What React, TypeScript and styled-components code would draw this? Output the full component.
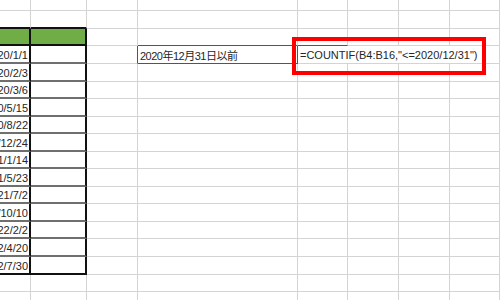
import styled, { createGlobalStyle } from 'styled-components';

const GRID = '#d4d4d4';
const INK = '#111111';
const RULE = '#6f6f6f';
const BOX = '#555555';

const GlobalStyle = createGlobalStyle`
  html, body {
    margin: 0;
    padding: 0;
    background: #ffffff;
    overflow: hidden;
  }
`;

const COLS = [31, 56, 51, 160, 50, 51, 51, 50];
const ROWS = [11, 18, 17, 18, 18, 17, 18, 17, 18, 17, 18, 17, 18, 17, 18, 18, 17, 17];

const Sheet = styled.div`
  position: relative;
  display: grid;
  grid-template-columns: ${COLS.map((c) => c + 'px').join(' ')};
  grid-template-rows: ${ROWS.map((r) => r + 'px').join(' ')};
  width: 500px;
  height: 300px;
  overflow: hidden;
  font-family: 'Liberation Sans', 'Noto Sans CJK JP', sans-serif;
  font-size: 11px;
  color: #262626;
`;

type Edge = { c: string; w: number };

const Cell = styled.div<{
  $right: Edge;
  $bottom: Edge;
  $fill?: string;
  $span?: number;
  $align?: 'left' | 'right';
}>`
  box-sizing: border-box;
  display: flex;
  align-items: center;
  justify-content: ${(p) => (p.$align === 'right' ? 'flex-end' : 'flex-start')};
  grid-column: span ${(p) => p.$span || 1};
  border-right: ${(p) => `${p.$right.w}px solid ${p.$right.c}`};
  border-bottom: ${(p) => `${p.$bottom.w}px solid ${p.$bottom.c}`};
  background: ${(p) => p.$fill || 'transparent'};
  overflow: ${(p) => (p.$align === 'right' ? 'hidden' : 'visible')};
  white-space: nowrap;
  padding: ${(p) => (p.$align === 'right' ? '1px 1px 0 0' : '1px 0 0 2px')};
`;

const Label = styled.span`
  font-size: 11px;
  letter-spacing: -0.5px;
`;

const Formula = styled.span`
  position: relative;
  z-index: 1;
`;

const Highlight = styled.div`
  position: absolute;
  left: 292px;
  top: 37px;
  width: 194px;
  height: 38px;
  box-sizing: border-box;
  border: 4px solid #ff0000;
  pointer-events: none;
`;

const DATES = [
  '2020/1/1',
  '2020/2/3',
  '2020/3/6',
  '2020/5/15',
  '2020/8/22',
  '2020/12/24',
  '2021/1/14',
  '2021/5/23',
  '2021/7/2',
  '2021/10/10',
  '2022/2/2',
  '2022/4/20',
  '2022/7/30',
];

const grid: Edge = { c: GRID, w: 1 };
const ink: Edge = { c: INK, w: 2 };
const rule: Edge = { c: RULE, w: 2 };
const box: Edge = { c: BOX, w: 1 };

const HEADER = 2;
const FIRST = 3;
const LAST = FIRST + DATES.length - 1;
const TARGET = FIRST; // row holding the condition and formula

const App: React.FC = () => {
  const cells: React.ReactNode[] = [];

  ROWS.forEach((_, r) => {
    const inTable = r >= HEADER && r <= LAST;
    const tableBottom: Edge = r === HEADER - 1 || r === HEADER || r === LAST ? ink : rule;

    for (let c = 0; c < COLS.length; c++) {
      const key = `${r}-${c}`;

      if (c <= 1) {
        const right = inTable ? ink : grid;
        const bottom = r === HEADER - 1 || inTable ? tableBottom : grid;
        cells.push(
          <Cell
            key={key}
            $right={right}
            $bottom={bottom}
            $fill={r === HEADER ? '#70ad47' : undefined}
            $align="right"
          >
            {c === 0 && r >= FIRST && r <= LAST ? DATES[r - FIRST] : null}
          </Cell>
        );
        continue;
      }

      if (r === TARGET && c === 4) {
        cells.push(
          <Cell key={key} $right={grid} $bottom={grid} $span={4}>
            <Formula>=COUNTIF(B4:B16,"&lt;=2020/12/31")</Formula>
          </Cell>
        );
        break;
      }

      const right = r === TARGET && (c === 2 || c === 3) ? box : grid;
      const bottom =
        (r === TARGET - 1 && (c === 3 || c === 4)) || (r === TARGET && c === 3) ? box : grid;

      cells.push(
        <Cell key={key} $right={right} $bottom={bottom}>
          {r === TARGET && c === 3 ? <Label>2020年12月31日以前</Label> : null}
        </Cell>
      );
    }
  });

  return (
    <>
      <GlobalStyle />
      <Sheet>
        {cells}
        <Highlight />
      </Sheet>
    </>
  );
};

export default App;
